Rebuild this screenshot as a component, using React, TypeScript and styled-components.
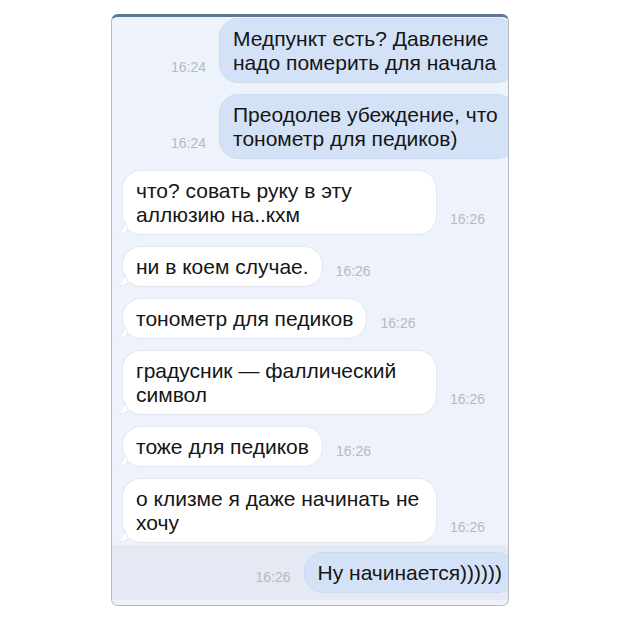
import React from 'react'
import styled, { createGlobalStyle } from 'styled-components'

const GlobalStyle = createGlobalStyle`
  html, body {
    margin: 0;
    padding: 0;
    background: #fff;
  }
  body {
    font-family: "Liberation Sans", Arial, sans-serif;
  }
`

type Msg = { text: string[]; time: string; out?: boolean }

const messages: Msg[] = [
  { text: ['Медпункт есть? Давление', 'надо померить для начала'], time: '16:24', out: true },
  { text: ['Преодолев убеждение, что', 'тонометр для педиков)'], time: '16:24', out: true },
  { text: ['что? совать руку в эту', 'аллюзию на..кхм'], time: '16:26' },
  { text: ['ни в коем случае.'], time: '16:26' },
  { text: ['тонометр для педиков'], time: '16:26' },
  { text: ['градусник — фаллический', 'символ'], time: '16:26' },
  { text: ['тоже для педиков'], time: '16:26' },
  { text: ['о клизме я даже начинать не', 'хочу'], time: '16:26' },
]

const last: Msg = { text: ['Ну начинается))))))'], time: '16:26', out: true }

const Tail = () => (
  <TailSvg width="14" height="14" viewBox="0 0 14 14">
    <path d="M9 0 C9 6 6 10 0 13 C5 13 9 12 12 9 Z" fill="#fff" stroke="#e2e6ee" strokeWidth="0.8" />
  </TailSvg>
)

const Row: React.FC<{ msg: Msg }> = ({ msg }) => (
  <StyledRow out={msg.out}>
    {msg.out && <Time>{msg.time}</Time>}
    <Bubble out={msg.out} wide={msg.text.length > 1}>
      {!msg.out && <Tail />}
      {msg.text.map((line, i) => (
        <div key={i}>{line}</div>
      ))}
    </Bubble>
    {!msg.out && <Time>{msg.time}</Time>}
  </StyledRow>
)

const App: React.FC = () => {
  return (
    <Page>
      <GlobalStyle />
      <Frame>
        <List>
          {messages.map((m, i) => (
            <Row key={i} msg={m} />
          ))}
        </List>
        <Footer>
          <Row msg={last} />
        </Footer>
        <BottomStrip />
      </Frame>
    </Page>
  )
}

const Page = styled.div`
  width: 620px;
  height: 620px;
  padding: 14px 0 0 111px;
  box-sizing: border-box;
`

const Frame = styled.div`
  width: 398px;
  height: 592px;
  box-sizing: border-box;
  background: #eef2fa;
  border: 1px solid #b4b9c2;
  border-top: 3px solid #5d7797;
  border-radius: 7px;
  overflow: hidden;
  display: flex;
  flex-direction: column;
`

const List = styled.div`
  display: flex;
  flex-direction: column;
  gap: 11px;
  padding: 1px 0 0 10px;
  flex: 1;
`

const Footer = styled.div`
  background: #e4e9f3;
  padding: 6px 0 7px 10px;
  border-top: 1px solid #e8ecf4;
`

const BottomStrip = styled.div`
  height: 5px;
  background: #eef2f8;
`

const StyledRow = styled.div<{ out?: boolean }>`
  display: flex;
  align-items: flex-end;
  justify-content: ${(p) => (p.out ? 'flex-end' : 'flex-start')};
  gap: 13px;
  margin-right: ${(p) => (p.out ? '-8px' : '0')};
`

const Bubble = styled.div<{ out?: boolean; wide?: boolean }>`
  position: relative;
  box-sizing: border-box;
  width: ${(p) => (p.wide ? (p.out ? '297px' : '315px') : 'auto')};
  padding: 8px 13px 7px 13px;
  font-size: 21px;
  line-height: 24px;
  color: #151515;
  border-radius: 19px;
  background: ${(p) => (p.out ? '#d4e2f7' : '#ffffff')};
  border: 1px solid ${(p) => (p.out ? '#cbdaf0' : '#e2e6ee')};
  white-space: nowrap;
`

const TailSvg = styled.svg`
  position: absolute;
  left: -7px;
  bottom: -1px;
`

const Time = styled.div`
  font-size: 14px;
  color: #b5bac2;
  padding-bottom: 8px;
  white-space: nowrap;
`

export default App
